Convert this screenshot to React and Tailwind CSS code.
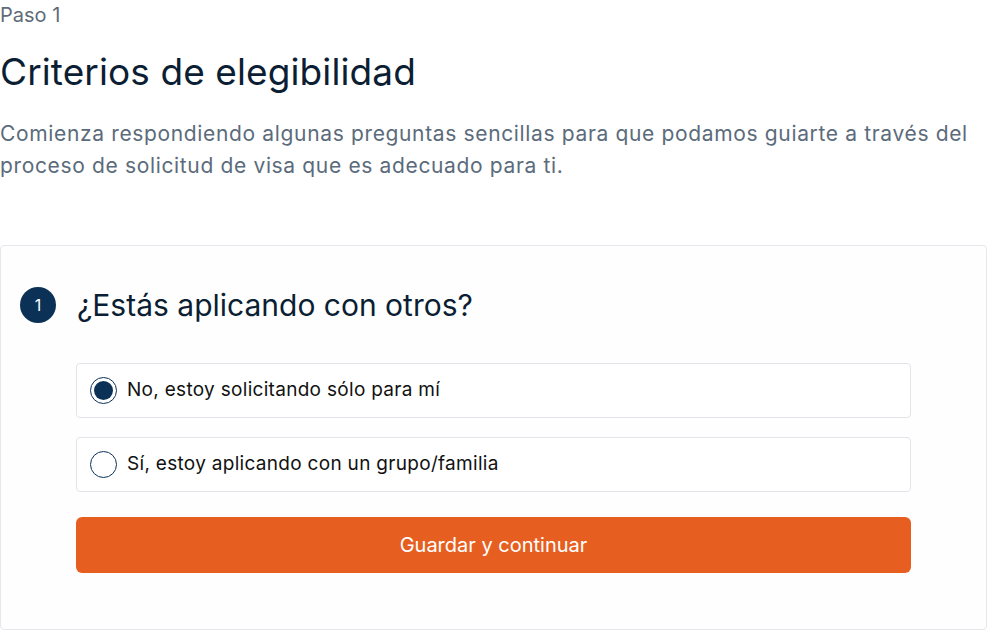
import { useState } from "react";

const options = [
  { id: "solo", label: "No, estoy solicitando sólo para mí" },
  { id: "grupo", label: "Sí, estoy aplicando con un grupo/familia" },
];

export default function App() {
  const [selected, setSelected] = useState("solo");

  return (
    <div className="min-h-screen bg-white font-['Inter',sans-serif] text-[#0c1f33]">
      <p className="pt-[3px] text-[20px] leading-[24px] text-[#5f6b78]">Paso 1</p>
      <h1 className="mt-[23px] text-[37px] leading-[44px] tracking-[0.1px] text-[#0b1e33]">Criterios de elegibilidad</h1>
      <p className="mt-[24px] text-[21px] leading-[32px] tracking-[0.65px] text-[#5b6b7b]">
        Comienza respondiendo algunas preguntas sencillas para que podamos guiarte a través del proceso de solicitud de visa que es adecuado para ti.
      </p>

      <div className="mt-[63px] rounded-[4px] border border-[#e4e7eb] bg-[#fefefe] pb-[56px] pl-[19px] pr-[75px] pt-[41px]">
        <div className="flex items-center gap-[21px]">
          <div className="flex h-[36px] w-[36px] shrink-0 items-center justify-center rounded-full bg-[#0b3157] text-[16px] text-white">
            1
          </div>
          <h2 className="text-[30px] leading-[36px] text-[#0b1e33]">¿Estás aplicando con otros?</h2>
        </div>

        <div className="ml-[56px] mt-[40px] flex flex-col gap-[19px]">
          {options.map((opt) => (
            <label
              key={opt.id}
              className="flex h-[55px] cursor-pointer items-center gap-[10px] rounded-[4px] border border-[#e1e4e8] bg-white px-[13px]"
              onClick={() => setSelected(opt.id)}
            >
              <span className="flex h-[27px] w-[27px] items-center justify-center rounded-full border-[1.5px] border-[#0b3157] bg-white">
                {selected === opt.id && <span className="h-[19px] w-[19px] rounded-full bg-[#0b3157]" />}
              </span>
              <span className="text-[19px] tracking-[0.3px] text-[#111]">{opt.label}</span>
            </label>
          ))}
        </div>

        <button className="ml-[56px] mt-[25px] flex h-[56px] w-[calc(100%-56px)] items-center justify-center rounded-[6px] bg-[#e75f20] text-[20px] text-white">
          Guardar y continuar
        </button>
      </div>
    </div>
  );
}
